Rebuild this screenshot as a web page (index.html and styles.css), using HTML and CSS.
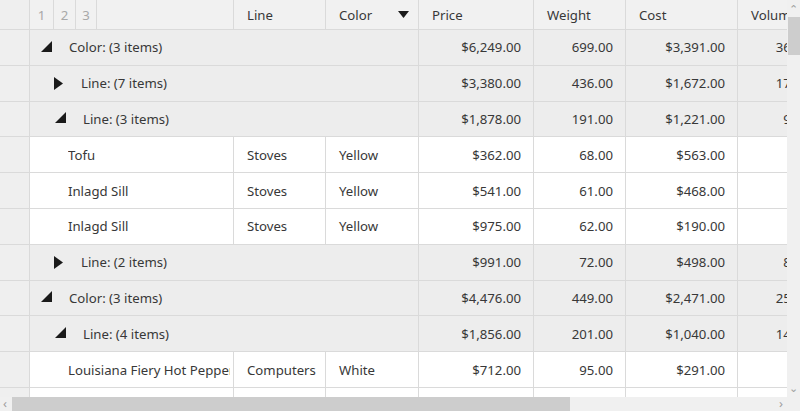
FILE: index.html
```html
<!DOCTYPE html>
<html lang="en">
<head>
    <meta charset="UTF-8">
    <title>Grouped Grid</title>
    <link rel="stylesheet" href="styles.css">
</head>
<body>
    <div class="grid">
        <div class="main">
            <div class="viewport">
                <!-- Column headers -->
                <div class="row header">
                    <div class="cell rh"></div>
                    <div class="cell c-name levels">
                        <span class="lvl">1</span>
                        <span class="lvl lvl2">2</span>
                        <span class="lvl lvl3">3</span>
                    </div>
                    <div class="cell c-line">Line</div>
                    <div class="cell c-color sorted">Color
                        <svg width="11" height="8" viewBox="0 0 11 8"><polygon points="0,0 11,0 5.5,7" fill="#1a1a1a"/></svg>
                    </div>
                    <div class="cell c-num">Price</div>
                    <div class="cell c-wt">Weight</div>
                    <div class="cell c-cost">Cost</div>
                    <div class="cell c-vol">Volume</div>
                </div>

                <div class="row group">
                    <div class="cell rh"></div>
                    <div class="cell c-span l1">
                        <svg class="toggle" width="11" height="11" viewBox="0 0 11 11"><polygon points="11,0 11,11 0,11" fill="#1a1a1a"/></svg>
                        Color: (3 items)
                    </div>
                    <div class="cell c-num right">$6,249.00</div>
                    <div class="cell c-wt right">699.00</div>
                    <div class="cell c-cost right">$3,391.00</div>
                    <div class="cell c-vol right">361.00</div>
                </div>

                <div class="row group">
                    <div class="cell rh"></div>
                    <div class="cell c-span l2">
                        <svg class="toggle" width="10" height="13" viewBox="0 0 10 13"><polygon points="0,0 9,6.5 0,13" fill="#1a1a1a"/></svg>
                        Line: (7 items)
                    </div>
                    <div class="cell c-num right">$3,380.00</div>
                    <div class="cell c-wt right">436.00</div>
                    <div class="cell c-cost right">$1,672.00</div>
                    <div class="cell c-vol right">172.00</div>
                </div>

                <div class="row group">
                    <div class="cell rh"></div>
                    <div class="cell c-span l2 open">
                        <svg class="toggle" width="11" height="11" viewBox="0 0 11 11"><polygon points="11,0 11,11 0,11" fill="#1a1a1a"/></svg>
                        Line: (3 items)
                    </div>
                    <div class="cell c-num right">$1,878.00</div>
                    <div class="cell c-wt right">191.00</div>
                    <div class="cell c-cost right">$1,221.00</div>
                    <div class="cell c-vol right">98.00</div>
                </div>

                <div class="row data">
                    <div class="cell rh"></div>
                    <div class="cell c-name item"><span class="txt">Tofu</span></div>
                    <div class="cell c-line"><span class="txt">Stoves</span></div>
                    <div class="cell c-color">Yellow</div>
                    <div class="cell c-num right">$362.00</div>
                    <div class="cell c-wt right">68.00</div>
                    <div class="cell c-cost right">$563.00</div>
                    <div class="cell c-vol right">4.00</div>
                </div>

                <div class="row data">
                    <div class="cell rh"></div>
                    <div class="cell c-name item"><span class="txt">Inlagd Sill</span></div>
                    <div class="cell c-line"><span class="txt">Stoves</span></div>
                    <div class="cell c-color">Yellow</div>
                    <div class="cell c-num right">$541.00</div>
                    <div class="cell c-wt right">61.00</div>
                    <div class="cell c-cost right">$468.00</div>
                    <div class="cell c-vol right">2.00</div>
                </div>

                <div class="row data">
                    <div class="cell rh"></div>
                    <div class="cell c-name item"><span class="txt">Inlagd Sill</span></div>
                    <div class="cell c-line"><span class="txt">Stoves</span></div>
                    <div class="cell c-color">Yellow</div>
                    <div class="cell c-num right">$975.00</div>
                    <div class="cell c-wt right">62.00</div>
                    <div class="cell c-cost right">$190.00</div>
                    <div class="cell c-vol right">7.00</div>
                </div>

                <div class="row group">
                    <div class="cell rh"></div>
                    <div class="cell c-span l2">
                        <svg class="toggle" width="10" height="13" viewBox="0 0 10 13"><polygon points="0,0 9,6.5 0,13" fill="#1a1a1a"/></svg>
                        Line: (2 items)
                    </div>
                    <div class="cell c-num right">$991.00</div>
                    <div class="cell c-wt right">72.00</div>
                    <div class="cell c-cost right">$498.00</div>
                    <div class="cell c-vol right">83.00</div>
                </div>

                <div class="row group">
                    <div class="cell rh"></div>
                    <div class="cell c-span l1">
                        <svg class="toggle" width="11" height="11" viewBox="0 0 11 11"><polygon points="11,0 11,11 0,11" fill="#1a1a1a"/></svg>
                        Color: (3 items)
                    </div>
                    <div class="cell c-num right">$4,476.00</div>
                    <div class="cell c-wt right">449.00</div>
                    <div class="cell c-cost right">$2,471.00</div>
                    <div class="cell c-vol right">254.00</div>
                </div>

                <div class="row group">
                    <div class="cell rh"></div>
                    <div class="cell c-span l2 open">
                        <svg class="toggle" width="11" height="11" viewBox="0 0 11 11"><polygon points="11,0 11,11 0,11" fill="#1a1a1a"/></svg>
                        Line: (4 items)
                    </div>
                    <div class="cell c-num right">$1,856.00</div>
                    <div class="cell c-wt right">201.00</div>
                    <div class="cell c-cost right">$1,040.00</div>
                    <div class="cell c-vol right">146.00</div>
                </div>

                <div class="row data">
                    <div class="cell rh"></div>
                    <div class="cell c-name item"><span class="txt">Louisiana Fiery Hot Pepper Sauce</span></div>
                    <div class="cell c-line"><span class="txt">Computers</span></div>
                    <div class="cell c-color">White</div>
                    <div class="cell c-num right">$712.00</div>
                    <div class="cell c-wt right">95.00</div>
                    <div class="cell c-cost right">$291.00</div>
                    <div class="cell c-vol right">3.00</div>
                </div>

                <div class="row data">
                    <div class="cell rh"></div>
                    <div class="cell c-name item"><span class="txt">Chef Anton's Gumbo Mix</span></div>
                    <div class="cell c-line"><span class="txt">Stoves</span></div>
                    <div class="cell c-color">White</div>
                    <div class="cell c-num right">$420.00</div>
                    <div class="cell c-wt right">38.00</div>
                    <div class="cell c-cost right">$250.00</div>
                    <div class="cell c-vol right">5.00</div>
                </div>
            </div>

            <div class="vscroll">
                <span class="arrow up">&#8963;</span>
                <div class="vthumb"></div>
                <span class="arrow down">&#8964;</span>
            </div>
        </div>
        <div class="hscroll">
            <span class="arrow left">&lsaquo;</span>
            <div class="hthumb"></div>
            <span class="arrow right-arrow">&rsaquo;</span>
        </div>
    </div>
</body>
</html>
```

FILE: styles.css
```css
body {
    margin: 0;
    padding: 0;
    font-family: "Noto Sans", "Open Sans", sans-serif;
    font-size: 13.2px;
    color: #383838;
    background: #fff;
}

.grid {
    width: 800px;
    height: 411px;
    display: flex;
    flex-direction: column;
    overflow: hidden;
}

.main {
    display: flex;
    height: 397px;
}

.viewport {
    width: 787px;
    overflow: hidden;
}

.row {
    display: flex;
    width: 830px;
    height: 35.8px;
}

.row.header {
    height: 30px;
    background-color: #f1f1f1;
}

.row.header .cell {
    padding-top: 1px;
}

.row.group {
    background-color: #ededed;
}

.row.data {
    background-color: #fff;
}

.cell {
    flex: none;
    box-sizing: border-box;
    display: flex;
    align-items: center;
    border-right: 1px solid #dadada;
    border-bottom: 1px solid #dadada;
    padding: 0 13px;
    white-space: nowrap;
    overflow: hidden;
}

/* clips long values at the cell's inner edge */
.txt {
    overflow: hidden;
    min-width: 0;
}

.cell.right {
    justify-content: flex-end;
    padding: 0 12px 0 0;
}

.rh {
    width: 30px;
    padding: 0;
    background-color: #efefef;
}

.c-name { width: 204px; }
.c-line { width: 92px; padding-right: 9px; }
.c-color { width: 93px; }
.c-num { width: 115px; }
.c-wt { width: 92px; }
.c-cost { width: 112px; }
.c-vol { width: 92px; }
.c-span { width: 389px; }

.c-name.item {
    padding: 0 3px 0 38px;
}

/* group level buttons in header */
.row.header .levels {
    padding: 0;
    align-items: stretch;
}

.lvl {
    width: 24px;
    box-sizing: border-box;
    border-right: 1px solid #dadada;
    display: flex;
    align-items: center;
    justify-content: center;
    padding-top: 1px;
    color: #a8a8a8;
}

.lvl2 { width: 22px; }
.lvl3 { width: 21px; }

.row.header .sorted {
    justify-content: space-between;
    padding-right: 9px;
}

/* group toggles */
.l1 {
    padding-left: 11px;
}

.l2 {
    padding-left: 24px;
}

.toggle {
    flex: none;
}

.l1 .toggle {
    margin-right: 17px;
    margin-top: -2px;
}

.l2 .toggle {
    margin-right: 17px;
}

.l2.open .toggle {
    margin-left: 1px;
    margin-right: 17px;
    margin-top: -2px;
}

/* scrollbars */
.vscroll {
    width: 13px;
    background-color: #f0f0f0;
    position: relative;
}

.vthumb {
    position: absolute;
    top: 17px;
    left: 1px;
    width: 12px;
    height: 38px;
    background-color: #cdcdcd;
}

.hscroll {
    height: 14px;
    background-color: #f0f0f0;
    position: relative;
}

.hthumb {
    position: absolute;
    left: 12px;
    top: 0;
    width: 558px;
    height: 14px;
    background-color: #cdcdcd;
}

.arrow {
    position: absolute;
    color: #a0a0a0;
    font-size: 11px;
    line-height: 11px;
}

.arrow.up { top: 3px; left: 2px; }
.arrow.down { bottom: 4px; left: 2px; }
.arrow.left { left: 3px; top: 1px; font-size: 13px; }
.arrow.right-arrow { left: 779px; top: 1px; font-size: 13px; }
```
